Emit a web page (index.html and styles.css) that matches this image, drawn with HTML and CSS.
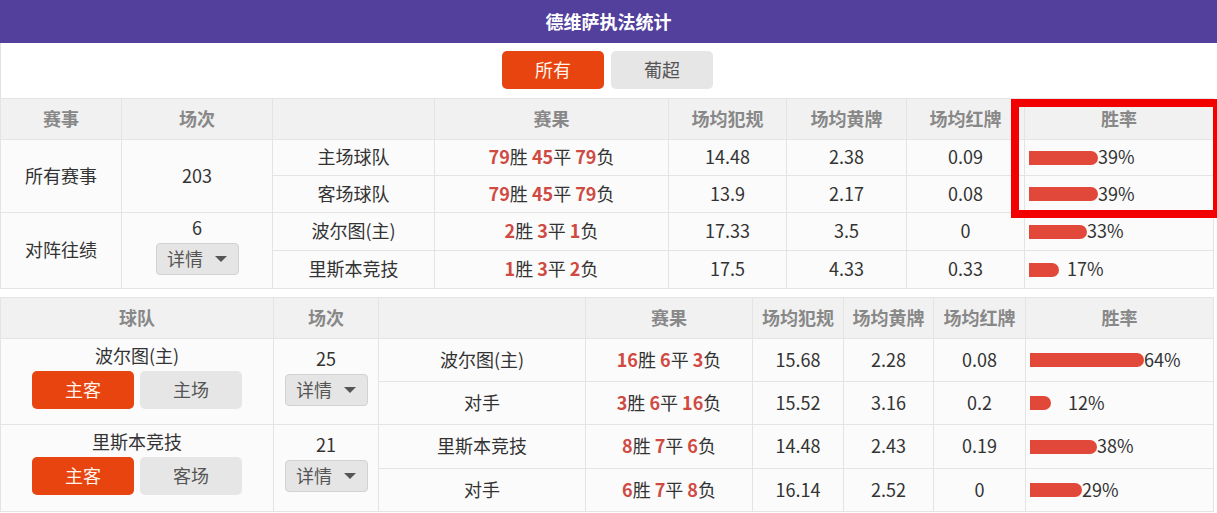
FILE: index.html
```html
<!DOCTYPE html>
<html lang="zh-CN">
<head>
<meta charset="utf-8">
<title>德维萨执法统计</title>
<link rel="stylesheet" href="styles.css">
</head>
<body>
<div class="page">
  <div class="title">德维萨执法统计</div>
  <div class="tabs">
    <button class="btn btn-red tab">所有</button>
    <button class="btn btn-gray tab">葡超</button>
  </div>

  <table class="stats t1">
    <colgroup>
      <col class="c121"><col class="c151"><col class="c162"><col class="c234"><col class="c118"><col class="c120"><col class="c118"><col class="c189">
    </colgroup>
    <thead>
      <tr class="h41">
        <th>赛事</th><th>场次</th><th></th><th>赛果</th><th>场均犯规</th><th>场均黄牌</th><th>场均红牌</th><th>胜率</th>
      </tr>
    </thead>
    <tbody>
      <tr class="h36">
        <td rowspan="2">所有赛事</td>
        <td rowspan="2">203</td>
        <td>主场球队</td>
        <td class="res"><b>79</b>胜 <b>45</b>平 <b>79</b>负</td>
        <td>14.48</td><td>2.38</td><td>0.09</td>
        <td class="rate"><div class="rw"><span class="track"><span class="bar" style="width:69px"></span></span><span class="pct">39%</span></div></td>
      </tr>
      <tr class="h37">
        <td>客场球队</td>
        <td class="res"><b>79</b>胜 <b>45</b>平 <b>79</b>负</td>
        <td>13.9</td><td>2.17</td><td>0.08</td>
        <td class="rate"><div class="rw"><span class="track"><span class="bar" style="width:69px"></span></span><span class="pct">39%</span></div></td>
      </tr>
      <tr class="h38">
        <td rowspan="2">对阵往绩</td>
        <td rowspan="2" class="stack"><div class="num">6</div><div class="dd">详情<i class="caret"></i></div></td>
        <td>波尔图(主)</td>
        <td class="res"><b>2</b>胜 <b>3</b>平 <b>1</b>负</td>
        <td>17.33</td><td>3.5</td><td>0</td>
        <td class="rate"><div class="rw"><span class="track"><span class="bar" style="width:58px"></span></span><span class="pct">33%</span></div></td>
      </tr>
      <tr class="h38">
        <td>里斯本竞技</td>
        <td class="res"><b>1</b>胜 <b>3</b>平 <b>2</b>负</td>
        <td>17.5</td><td>4.33</td><td>0.33</td>
        <td class="rate"><div class="rw"><span class="track"><span class="bar" style="width:30px"></span></span><span class="pct">17%</span></div></td>
      </tr>
    </tbody>
  </table>

  <table class="stats t2">
    <colgroup>
      <col class="c273"><col class="c105"><col class="c207"><col class="c167"><col class="c91"><col class="c90"><col class="c92"><col class="c188">
    </colgroup>
    <thead>
      <tr class="h41">
        <th>球队</th><th>场次</th><th></th><th>赛果</th><th>场均犯规</th><th>场均黄牌</th><th>场均红牌</th><th>胜率</th>
      </tr>
    </thead>
    <tbody>
      <tr class="h43">
        <td rowspan="2" class="stack">
          <div class="team">波尔图(主)</div>
          <div class="pair"><button class="btn btn-red sm">主客</button><button class="btn btn-gray sm">主场</button></div>
        </td>
        <td rowspan="2" class="stack"><div class="num">25</div><div class="dd">详情<i class="caret"></i></div></td>
        <td>波尔图(主)</td>
        <td class="res"><b>16</b>胜 <b>6</b>平 <b>3</b>负</td>
        <td>15.68</td><td>2.28</td><td>0.08</td>
        <td class="rate"><div class="rw"><span class="track"><span class="bar" style="width:114px"></span></span><span class="pct">64%</span></div></td>
      </tr>
      <tr class="h43">
        <td>对手</td>
        <td class="res"><b>3</b>胜 <b>6</b>平 <b>16</b>负</td>
        <td>15.52</td><td>3.16</td><td>0.2</td>
        <td class="rate"><div class="rw"><span class="track"><span class="bar" style="width:21px"></span></span><span class="pct">12%</span></div></td>
      </tr>
      <tr class="h44">
        <td rowspan="2" class="stack">
          <div class="team">里斯本竞技</div>
          <div class="pair"><button class="btn btn-red sm">主客</button><button class="btn btn-gray sm">客场</button></div>
        </td>
        <td rowspan="2" class="stack"><div class="num">21</div><div class="dd">详情<i class="caret"></i></div></td>
        <td>里斯本竞技</td>
        <td class="res"><b>8</b>胜 <b>7</b>平 <b>6</b>负</td>
        <td>14.48</td><td>2.43</td><td>0.19</td>
        <td class="rate"><div class="rw"><span class="track"><span class="bar" style="width:67px"></span></span><span class="pct">38%</span></div></td>
      </tr>
      <tr class="h43">
        <td>对手</td>
        <td class="res"><b>6</b>胜 <b>7</b>平 <b>8</b>负</td>
        <td>16.14</td><td>2.52</td><td>0</td>
        <td class="rate"><div class="rw"><span class="track"><span class="bar" style="width:52px"></span></span><span class="pct">29%</span></div></td>
      </tr>
    </tbody>
  </table>

  <div class="highlight"></div>
</div>
</body>
</html>
```

FILE: styles.css
```css
* { box-sizing: border-box; }
html, body {
  margin: 0;
  padding: 0;
  background: #ffffff;
  overflow: hidden;
}
body {
  font-family: "Noto Sans CJK SC", "Noto Sans", "Liberation Sans", sans-serif;
  font-size: 18px;
  color: #333;
}
.page {
  position: relative;
  width: 1217px;
  height: 513px;
}
.title {
  height: 43px;
  background: #52409c;
  color: #fff;
  font-weight: bold;
  font-size: 18px;
  display: flex;
  align-items: center;
  justify-content: center;
  padding-bottom: 1px;
}
.tabs {
  height: 55px;
  display: flex;
  justify-content: center;
  gap: 7px;
  padding-top: 8px;
  border-left: 1px solid #e2e2e2;
  width: 1214px;
}
.btn {
  border: none;
  border-radius: 5px;
  font-family: inherit;
  font-size: 18px;
  padding: 0 0 2px;
  cursor: pointer;
}
.btn-red { background: #e8440f; color: #fff3ea; }
.btn-gray { background: #e6e6e6; color: #555; }
.tab { width: 102px; height: 38px; }

.stats {
  width: 1213px;
  table-layout: fixed;
  border-collapse: collapse;
  background: #fbfbfb;
}
.t2 { margin-top: 8px; }
.stats th, .stats td {
  border: 1px solid #e4e4e4;
  text-align: center;
  vertical-align: middle;
  padding: 0 0 3px;
  font-weight: normal;
  line-height: 22px;
  white-space: nowrap;
}
.stats th {
  background: #f1f1f1;
  color: #888;
  font-weight: bold;
}
.c121 { width: 121px; } .c151 { width: 151px; } .c162 { width: 162px; } .c234 { width: 234px; }
.c118 { width: 118px; } .c120 { width: 120px; } .c189 { width: 189px; }
.c273 { width: 273px; } .c105 { width: 105px; } .c207 { width: 207px; } .c167 { width: 167px; }
.c91 { width: 91px; } .c90 { width: 90px; } .c92 { width: 92px; } .c188 { width: 188px; }

.h36 { height: 36px; } .h37 { height: 37px; } .h38 { height: 38px; }
.h41 { height: 41px; } .h43 { height: 43px; } .h44 { height: 44px; }

.res b { color: #d04a42; font-weight: bold; }

.stats td.rate { text-align: left; padding: 0; }
.rw {
  display: flex;
  align-items: center;
  padding-left: 4px;
}
.track {
  display: inline-flex;
  min-width: 38px;
}
.bar {
  display: block;
  height: 14px;
  background: #e2483a;
  border-radius: 0 7px 7px 0;
}
.pct { color: #333; margin-top: -3px; }

.stats td.stack { padding-bottom: 11px; }
.stack .num, .stack .team { line-height: 22px; }
.dd {
  display: inline-flex;
  align-items: center;
  justify-content: center;
  width: 83px;
  height: 32px;
  margin-top: 5px;
  padding-bottom: 2px;
  background: #e5e5e5;
  border: 1px solid #d2d2d2;
  border-radius: 4px;
  color: #555;
}
.caret {
  display: inline-block;
  width: 0;
  height: 0;
  margin-left: 12px;
  margin-top: 2px;
  border-left: 6px solid transparent;
  border-right: 6px solid transparent;
  border-top: 6px solid #555;
}
.pair {
  display: flex;
  justify-content: center;
  gap: 6px;
  margin-top: 5px;
}
.sm { width: 102px; height: 38px; }

.highlight {
  position: absolute;
  left: 1011px;
  top: 99px;
  width: 210px;
  height: 119px;
  border: 8px solid #f30000;
  pointer-events: none;
}
```
